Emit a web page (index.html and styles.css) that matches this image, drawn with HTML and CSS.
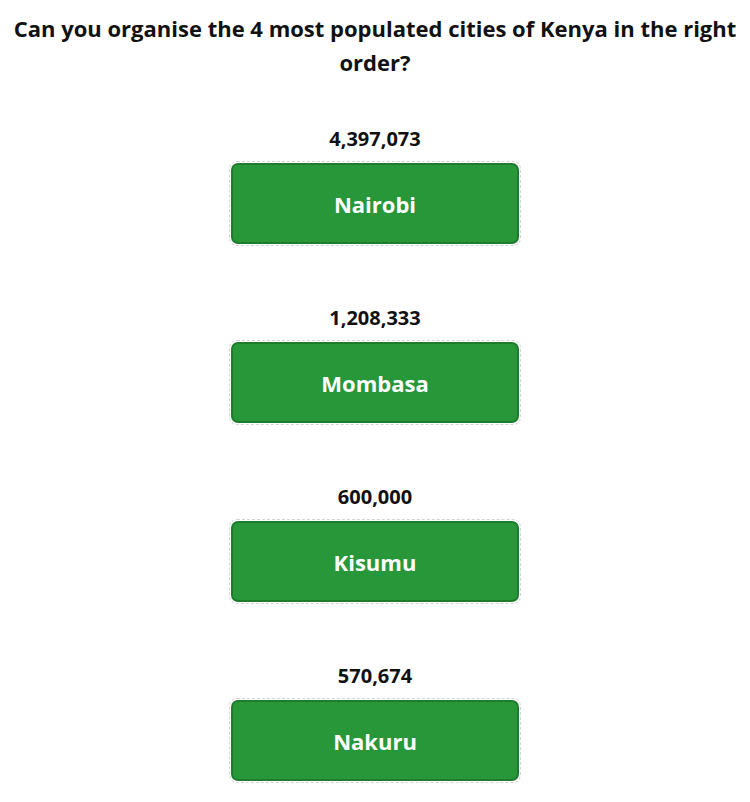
FILE: index.html
```html
<!DOCTYPE html>
<html lang="en">
<head>
    <meta charset="UTF-8">
    <meta name="viewport" content="width=device-width, initial-scale=1.0">
    <title>Kenya Cities</title>
    <link rel="stylesheet" href="styles.css">
</head>
<body>
    <h2 class="question">Can you organise the 4 most populated cities of Kenya in the right order?</h2>

    <ul class="cityList">
        <li class="city">
            <div class="population">4,397,073</div>
            <div class="slot"><div class="card">Nairobi</div></div>
        </li>
        <li class="city">
            <div class="population">1,208,333</div>
            <div class="slot"><div class="card">Mombasa</div></div>
        </li>
        <li class="city">
            <div class="population">600,000</div>
            <div class="slot"><div class="card">Kisumu</div></div>
        </li>
        <li class="city">
            <div class="population">570,674</div>
            <div class="slot"><div class="card">Nakuru</div></div>
        </li>
    </ul>
</body>
</html>
```

FILE: styles.css
```css
body {
    font-family: "Open Sans", "Noto Sans", Arial, sans-serif;
    margin: 8px;
    color: #111;
    background: #fff;
}

.question {
    font-size: 22px;
    font-weight: 700;
    line-height: 34px;
    text-align: center;
    margin: 3px 0 48px 0;
}

.cityList {
    list-style-type: none;
    padding: 0;
    margin: 0;
    display: flex;
    flex-direction: column;
    align-items: center;
}

.city {
    display: flex;
    flex-direction: column;
    align-items: center;
    margin-bottom: 60px;
}

.city:last-child {
    margin-bottom: 0;
}

.population {
    font-size: 20px;
    font-weight: 700;
    line-height: 24px;
    margin-bottom: 10px;
}

.slot {
    border: 1px dashed #d4d4d4;
    border-radius: 8px;
    padding: 1px;
}

.card {
    box-sizing: border-box;
    width: 288px;
    height: 81px;
    display: flex;
    align-items: center;
    justify-content: center;
    background-color: #27973a;
    border: 2px solid #1f7c2f;
    border-radius: 7px;
    color: #fff;
    font-size: 22px;
    font-weight: 700;
}
```
